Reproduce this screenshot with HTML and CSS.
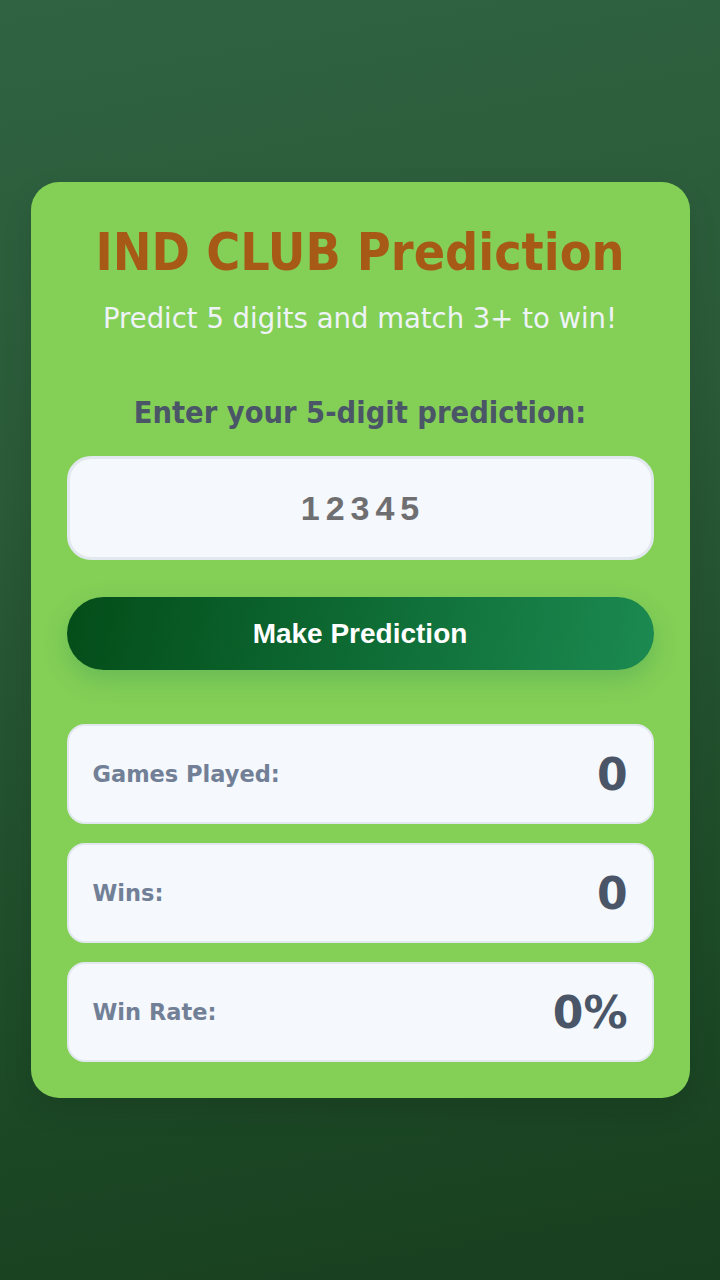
FILE: index.html
```html
<!DOCTYPE html>
<html lang="en">
<head>
<meta charset="utf-8">
<title>IND CLUB Prediction</title>
<link rel="stylesheet" href="styles.css">
</head>
<body>
  <main class="card">
    <h1 class="title">IND CLUB Prediction</h1>
    <p class="subtitle">Predict 5 digits and match 3+ to win!</p>

    <label class="prompt" for="guess">Enter your 5-digit prediction:</label>
    <input class="guess" id="guess" type="text" maxlength="5" placeholder="12345">

    <button class="predict" type="button">Make Prediction</button>

    <section class="stats">
      <div class="stat">
        <span class="stat-label">Games Played:</span>
        <span class="stat-value">0</span>
      </div>
      <div class="stat">
        <span class="stat-label">Wins:</span>
        <span class="stat-value">0</span>
      </div>
      <div class="stat">
        <span class="stat-label">Win Rate:</span>
        <span class="stat-value">0%</span>
      </div>
    </section>
  </main>
</body>
</html>
```

FILE: styles.css
```css
* {
  box-sizing: border-box;
}

html, body {
  margin: 0;
  height: 100%;
}

body {
  min-height: 1280px;
  display: flex;
  align-items: center;
  justify-content: center;
  font-family: "DejaVu Sans Condensed", "DejaVu Sans", sans-serif;
  background: linear-gradient(170deg, #2f6341 0%, #2a5a38 35%, #1d4a27 75%, #183f1f 100%);
}

.card {
  width: 659px;
  background: #84cf56;
  border-radius: 28px;
  padding: 36px;
  display: flex;
  flex-direction: column;
  box-shadow: 0 12px 30px rgba(0, 0, 0, 0.1);
}

.title {
  margin: 0;
  text-align: center;
  font-size: 51.5px;
  line-height: 68px;
  font-weight: bold;
  color: #a65a16;
}

.subtitle {
  margin: 12px 0 0;
  text-align: center;
  font-family: "DejaVu Sans", sans-serif;
  font-size: 27.5px;
  line-height: 40px;
  color: #eef3f8;
}

.prompt {
  margin-top: 55px;
  text-align: center;
  font-size: 30.5px;
  line-height: 40px;
  font-weight: bold;
  color: #4a5568;
}

.guess {
  margin-top: 23px;
  width: 100%;
  height: 104px;
  border: 3px solid #e2e8f0;
  border-radius: 24px;
  background: #f5f8fc;
  text-align: center;
  font-family: "Liberation Sans", Arial, sans-serif;
  font-size: 34px;
  font-weight: bold;
  letter-spacing: 6px;
  text-indent: 6px;
  color: #4a5568;
  outline: none;
}

.guess::placeholder {
  color: #6f6f72;
  opacity: 1;
}

.predict {
  margin-top: 37px;
  width: 100%;
  height: 73px;
  border: none;
  border-radius: 37px;
  background: linear-gradient(100deg, #044d19 0%, #0e6b34 50%, #1b8a51 100%);
  color: #ffffff;
  font-family: "Liberation Sans", Arial, sans-serif;
  font-size: 28px;
  font-weight: bold;
  box-shadow: 0 10px 24px rgba(40, 140, 90, 0.3);
}

.stats {
  margin-top: 54px;
  display: flex;
  flex-direction: column;
  gap: 19px;
}

.stat {
  height: 100px;
  display: flex;
  align-items: center;
  justify-content: space-between;
  padding: 0 24px;
  background: #f5f8fc;
  border: 2px solid #e2e8f0;
  border-radius: 18px;
}

.stat-label {
  font-family: "DejaVu Sans", sans-serif;
  font-size: 22.5px;
  font-weight: bold;
  color: #718096;
}

.stat-value {
  font-family: "DejaVu Sans", sans-serif;
  font-size: 44px;
  font-weight: bold;
  color: #4a5568;
}
```
